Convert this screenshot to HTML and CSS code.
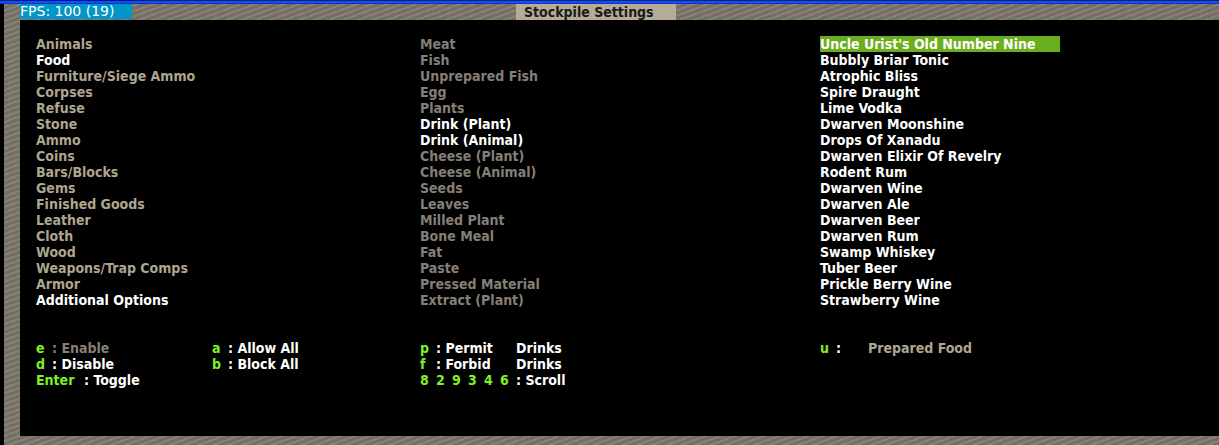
FILE: index.html
```html
<!DOCTYPE html>
<html>
<head>
<meta charset="utf-8">
<link rel="stylesheet" href="styles.css">
</head>
<body>
<div class="bluebar"></div>
<div class="frame">
  <div class="titlebar">
    <div class="fps">FPS: 100 (19)</div>
    <div class="title">Stockpile Settings</div>
  </div>
  <div class="panel">
    <div class="lists">
      <ul class="list col1">
        <li class="tan">Animals</li>
        <li class="white">Food</li>
        <li class="tan">Furniture/Siege Ammo</li>
        <li class="tan">Corpses</li>
        <li class="tan">Refuse</li>
        <li class="tan">Stone</li>
        <li class="tan">Ammo</li>
        <li class="tan">Coins</li>
        <li class="tan">Bars/Blocks</li>
        <li class="tan">Gems</li>
        <li class="tan">Finished Goods</li>
        <li class="tan">Leather</li>
        <li class="tan">Cloth</li>
        <li class="tan">Wood</li>
        <li class="tan">Weapons/Trap Comps</li>
        <li class="tan">Armor</li>
        <li class="white">Additional Options</li>
      </ul>
      <ul class="list col2">
        <li class="dim">Meat</li>
        <li class="dim">Fish</li>
        <li class="dim">Unprepared Fish</li>
        <li class="dim">Egg</li>
        <li class="dim">Plants</li>
        <li class="white">Drink (Plant)</li>
        <li class="white">Drink (Animal)</li>
        <li class="dim">Cheese (Plant)</li>
        <li class="dim">Cheese (Animal)</li>
        <li class="dim">Seeds</li>
        <li class="dim">Leaves</li>
        <li class="dim">Milled Plant</li>
        <li class="dim">Bone Meal</li>
        <li class="dim">Fat</li>
        <li class="dim">Paste</li>
        <li class="dim">Pressed Material</li>
        <li class="dim">Extract (Plant)</li>
      </ul>
      <ul class="list col3">
        <li class="white selected">Uncle Urist's Old Number Nine</li>
        <li class="white">Bubbly Briar Tonic</li>
        <li class="white">Atrophic Bliss</li>
        <li class="white">Spire Draught</li>
        <li class="white">Lime Vodka</li>
        <li class="white">Dwarven Moonshine</li>
        <li class="white">Drops Of Xanadu</li>
        <li class="white">Dwarven Elixir Of Revelry</li>
        <li class="white">Rodent Rum</li>
        <li class="white">Dwarven Wine</li>
        <li class="white">Dwarven Ale</li>
        <li class="white">Dwarven Beer</li>
        <li class="white">Dwarven Rum</li>
        <li class="white">Swamp Whiskey</li>
        <li class="white">Tuber Beer</li>
        <li class="white">Prickle Berry Wine</li>
        <li class="white">Strawberry Wine</li>
      </ul>
    </div>
    <div class="keys">
      <div class="krow">
        <span class="k w16 green">e</span><span class="k w160 dim">: Enable</span>
        <span class="k w16 green">a</span><span class="k w192 white">: Allow All</span>
        <span class="k w16 green">p</span><span class="k w80 white">: Permit</span><span class="k w304 white">Drinks</span>
        <span class="k w16 green">u</span><span class="k w32 white">:</span><span class="k tan">Prepared Food</span>
      </div>
      <div class="krow">
        <span class="k w16 green">d</span><span class="k w160 white">: Disable</span>
        <span class="k w16 green">b</span><span class="k w192 white">: Block All</span>
        <span class="k w16 green">f</span><span class="k w80 white">: Forbid</span><span class="k white">Drinks</span>
      </div>
      <div class="krow">
        <span class="k w48 green">Enter</span><span class="k w336 white">: Toggle</span>
        <span class="k w16 green">8</span><span class="k w16 green">2</span><span class="k w16 green">9</span><span class="k w16 green">3</span><span class="k w16 green">4</span><span class="k w16 green">6</span><span class="k white">: Scroll</span>
      </div>
    </div>
  </div>
</div>
</body>
</html>
```

FILE: styles.css
```css
* { box-sizing: border-box; }
html, body {
  margin: 0;
  padding: 0;
  background: #000;
  width: 1219px;
  height: 445px;
  overflow: hidden;
  font-family: "DejaVu Sans Condensed", "DejaVu Sans", sans-serif;
  font-weight: bold;
  font-size: 14px;
}
.bluebar {
  height: 4px;
  background: linear-gradient(#001a80 0 1px, #1050f0 1px 3px, #0838c8 3px 4px);
}
.frame {
  margin-left: 4px;
  height: 441px;
  background:
    repeating-linear-gradient(160deg, rgba(255,255,255,0.07) 0 2px, rgba(0,0,0,0.08) 2px 5px),
    #7f776d;
}
.titlebar {
  height: 16px;
  display: flex;
  padding-left: 16px;
}
.fps {
  width: 112px;
  height: 15px;
  background: #0096c8;
  color: #fff;
  font-family: "DejaVu Sans", sans-serif;
  font-weight: normal;
  font-size: 14px;
  line-height: 15px;
  padding-left: 0;
}
.title {
  margin-left: 384px;
  width: 160px;
  height: 16px;
  background: #b5ab96;
  color: #1a1a1a;
  padding-left: 8px;
  line-height: 16px;
  font-size: 14px;
}
.panel {
  margin-left: 16px;
  height: 416px;
  background: #000;
  padding: 16px 0 0 16px;
}
.lists {
  display: flex;
}
.list {
  list-style: none;
  margin: 0;
  padding: 0;
}
.list li {
  height: 16px;
  line-height: 16px;
  white-space: nowrap;
}
.col1 { width: 384px; }
.col2 { width: 400px; }
.col3 { width: 240px; }
.selected { background: #6aae1e; }
.keys {
  margin-top: 32px;
}
.krow {
  display: flex;
  height: 16px;
  line-height: 16px;
}
.k { white-space: nowrap; flex: none; }
.w16 { width: 16px; }
.w32 { width: 32px; }
.w48 { width: 48px; }
.w80 { width: 80px; }
.w160 { width: 160px; }
.w192 { width: 192px; }
.w304 { width: 304px; }
.w336 { width: 336px; }
.tan { color: #aea68f; }
.dim { color: #857f78; }
.white { color: #ffffff; }
.green { color: #7ef02a; }
```
